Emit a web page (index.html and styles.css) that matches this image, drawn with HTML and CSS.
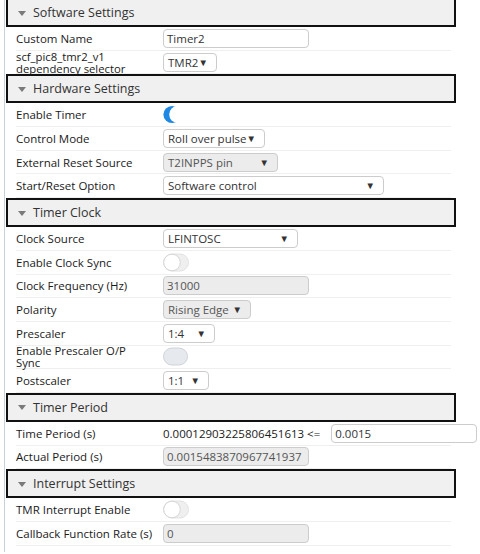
FILE: index.html
```html
<!DOCTYPE html>
<html>
<head>
<meta charset="utf-8">
<link rel="stylesheet" href="styles.css">
</head>
<body>
<div class="panel">
  <section class="group">
    <div class="head first"><span class="caret"></span>Software Settings</div>
    <div class="row"><span class="label">Custom Name</span><div class="field w146">Timer2</div></div>
    <div class="row"><span class="label two">scf_pic8_tmr2_v1<br>dependency selector</span><div class="field sel w54">TMR2<span class="arr">▼</span></div></div>
  </section>
  <section class="group">
    <div class="head"><span class="caret"></span>Hardware Settings</div>
    <div class="row"><span class="label">Enable Timer</span>
      <svg class="tog" width="26" height="19" viewBox="0 0 26 19"><circle cx="9" cy="9.5" r="8.6" fill="#1e88e5"/><circle cx="14.6" cy="9.5" r="8.4" fill="#fff"/></svg>
    </div>
    <div class="row"><span class="label">Control Mode</span><div class="field sel w102">Roll over pulse<span class="arr">▼</span></div></div>
    <div class="row"><span class="label">External Reset Source</span><div class="field sel dis w115">T2INPPS pin<span class="arr">▼</span></div></div>
    <div class="row"><span class="label">Start/Reset Option</span><div class="field sel w221">Software control<span class="arr">▼</span></div></div>
  </section>
  <section class="group">
    <div class="head"><span class="caret"></span>Timer Clock</div>
    <div class="row"><span class="label">Clock Source</span><div class="field sel w135">LFINTOSC<span class="arr">▼</span></div></div>
    <div class="row"><span class="label">Enable Clock Sync</span>
      <svg class="tog" width="26" height="19" viewBox="0 0 26 19"><rect x="0.5" y="1" width="25" height="17" rx="8.5" fill="#efefef" stroke="#e2e2e2"/><circle cx="9" cy="9.5" r="8.3" fill="#fff" stroke="#d6d6d6"/></svg>
    </div>
    <div class="row"><span class="label">Clock Frequency (Hz)</span><div class="field dis w146">31000</div></div>
    <div class="row"><span class="label">Polarity</span><div class="field sel dis w88">Rising Edge<span class="arr">▼</span></div></div>
    <div class="row"><span class="label">Prescaler</span><div class="field sel w52">1:4<span class="arr">▼</span></div></div>
    <div class="row"><span class="label two">Enable Prescaler O/P<br>Sync</span>
      <svg class="tog" width="26" height="19" viewBox="0 0 26 19"><rect x="0.5" y="1" width="24" height="17" rx="8.5" fill="#e6e9ed" stroke="#cfd3d8"/></svg>
    </div>
    <div class="row"><span class="label">Postscaler</span><div class="field sel w46">1:1<span class="arr">▼</span></div></div>
  </section>
  <section class="group">
    <div class="head"><span class="caret"></span>Timer Period</div>
    <div class="row"><span class="label">Time Period (s)</span><span class="plain">0.00012903225806451613 &lt;=</span><div class="field w146 mlx">0.0015</div></div>
    <div class="row"><span class="label">Actual Period (s)</span><div class="field dis w146">0.0015483870967741937</div></div>
  </section>
  <section class="group">
    <div class="head"><span class="caret"></span>Interrupt Settings</div>
    <div class="row"><span class="label">TMR Interrupt Enable</span>
      <svg class="tog" width="26" height="19" viewBox="0 0 26 19"><rect x="0.5" y="1" width="25" height="17" rx="8.5" fill="#efefef" stroke="#e2e2e2"/><circle cx="9" cy="9.5" r="8.3" fill="#fff" stroke="#d6d6d6"/></svg>
    </div>
    <div class="row"><span class="label">Callback Function Rate (s)</span><div class="field dis w146">0</div></div>
  </section>
</div>
</body>
</html>
```
FILE: styles.css
```css
html, body {
  margin: 0;
  padding: 0;
  background: #fff;
  height: 100%;
  overflow: hidden;
}
body {
  font-family: "Open Sans", "Noto Sans", sans-serif;
  font-size: 11.5px;
  color: #1a1a1a;
}
.panel {
  margin-left: 4px;
  border-left: 1px solid #c9d1db;
  height: 100%;
  width: 476px;
}
.head {
  margin-left: 1px;
  width: 450px;
  height: 29px;
  box-sizing: border-box;
  border: 2px solid #111;
  background: #f0f0f0;
  display: flex;
  align-items: center;
  padding-left: 10px;
  font-size: 12.5px;
  color: #333;
}
.head.first {
  margin-top: -2px;
}
.caret {
  width: 0;
  height: 0;
  border-left: 4px solid transparent;
  border-right: 4px solid transparent;
  border-top: 5px solid #7a7a7a;
  margin-right: 7px;
  margin-top: 1px;
}
.row {
  margin-left: 11px;
  width: 435px;
  height: 23.7px;
  box-sizing: border-box;
  border-bottom: 1px solid #efefef;
  display: flex;
  align-items: center;
}
.label {
  width: 147px;
  flex: none;
  white-space: nowrap;
}
.label.two {
  line-height: 12px;
  font-size: 11.3px;
  padding-top: 1px;
}
.field {
  height: 19px;
  box-sizing: border-box;
  border: 1px solid #cccccc;
  border-radius: 4px;
  background: #fff;
  padding-left: 3px;
  display: flex;
  align-items: center;
  color: #333;
  position: relative;
  flex: none;
}
.field.dis {
  background: #ececec;
  color: #555;
}
.sel {
  padding-left: 4px;
}
.arr {
  position: absolute;
  right: 8px;
  top: 3px;
  font-size: 9.5px;
  color: #333;
  line-height: 11px;
}
.w146 { width: 146px; }
.w54 { width: 54px; }
.w102 { width: 102px; }
.w115 { width: 115px; }
.w221 { width: 221px; }
.w135 { width: 135px; }
.w88 { width: 88px; }
.w52 { width: 52px; }
.w46 { width: 46px; }
.mlx { margin-left: 11px; }
.plain {
  color: #1a1a1a;
  white-space: nowrap;
}
.tog {
  display: block;
  flex: none;
}
```
